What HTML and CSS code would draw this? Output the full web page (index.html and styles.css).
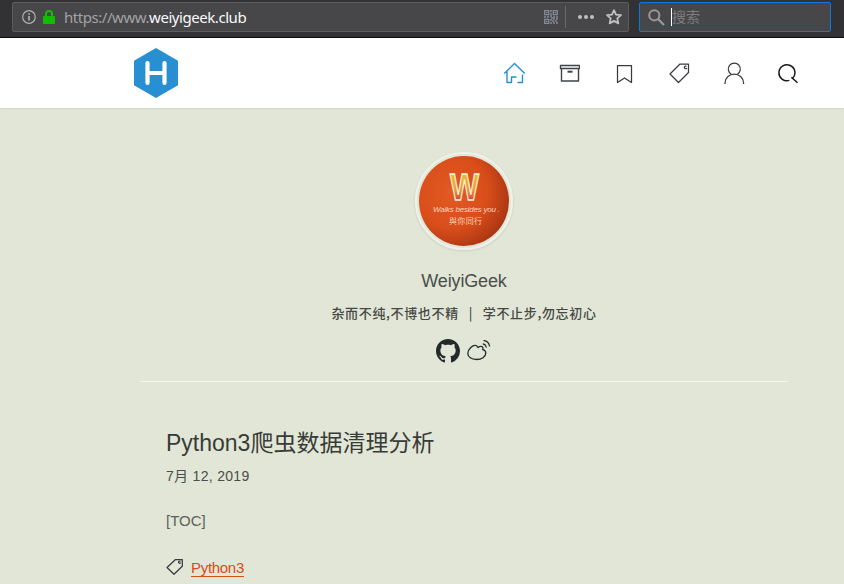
FILE: index.html
```html
<!DOCTYPE html>
<html lang="zh-CN">
<head>
<meta charset="utf-8">
<title>WeiyiGeek</title>
<link rel="stylesheet" href="styles.css">
</head>
<body>
<div class="toolbar">
  <div class="address">
    <svg class="info" width="14" height="14" viewBox="0 0 14 14" fill="none" stroke="#b1b1b3"><circle cx="7" cy="7" r="6.3" stroke-width="1.2"/><path d="M7 6v4.5M7 3.3v1.5" stroke-width="1.7"/></svg>
    <svg class="lock" width="12" height="14" viewBox="0 0 12 14"><path d="M3 7V4a3 3 0 0 1 6 0v3" fill="none" stroke="#12bc00" stroke-width="2"/><rect y="6" width="12" height="8" rx="1" fill="#12bc00"/></svg>
    <span class="url">https://www.<b>weiyigeek.club</b></span>
    <svg class="qr" width="14" height="14" viewBox="0 0 14 14" fill="none" stroke="#858b96"><path d="M.7.7h4v4h-4zM9.3.7h4v4h-4zM.7 9.3h4v4h-4z" stroke-width="1.3"/><path d="M2 2.7h1.5M10.5 2.7H12M2 11.3h1.5M6 1h2M7 3v2M0 7h2M3 7h2M6 6h2M9 7h2M12 7h2M7 8h2M6 10h2M9 9h2M12 9h2M8 11h2M11 11h2M6 13h2M9 13h2M12 13h2" stroke-width="1.3"/></svg>
    <span class="divider"></span>
    <svg class="dots" width="16" height="4" viewBox="0 0 16 4" fill="#c0c0c2"><circle cx="2" cy="2" r="2"/><circle cx="8" cy="2" r="2"/><circle cx="14" cy="2" r="2"/></svg>
    <svg width="16" height="16" viewBox="0 0 16 16" fill="none" stroke="#c0c0c2" stroke-width="1.8" stroke-linejoin="round"><path d="M8 1.2l2 4.4 5 .5-3.7 3.3 1 5L8 11.9l-4.3 2.5 1-5L1 6.1l5-.5z"/></svg>
  </div>
  <div class="search">
    <svg width="17" height="17" viewBox="0 0 17 17" fill="none" stroke="#98989a" stroke-width="2"><circle cx="6.3" cy="6.3" r="5.1"/><path d="M10 10l6 6" stroke-width="2.3"/></svg>
    <span class="caret"></span><span class="placeholder">搜索</span>
  </div>
</div>

<header class="header">
  <a class="logo"><svg width="46" height="52" viewBox="0 0 46 52"><path d="M23 1l22 12.7v24.6L23 51 1 38.300V13.700z" fill="#278fd2"/><path d="M14.500 16v20M31.500 16v20M14.500 26h17" fill="none" stroke="#fff" stroke-width="4.200" stroke-linecap="round"/></svg></a>
  <nav class="nav">
    <svg class="active" viewBox="0 0 22 22"><path d="M1.300 11.500L11.500 1.500l10.200 10M4 9.500v11h4.500v-5.500h5M14.500 20.500h5v-8"/></svg>
    <svg class="archive" viewBox="0 0 22 22"><path d="M2.500 3.500h19v3h-19zM3.500 6.500v12.500h17v-12.500"/><path d="M9.500 9.700h5" stroke-width="2"/></svg>
    <svg viewBox="0 0 22 22"><path d="M4.500 20.500v-17h14v17l-7-4.500z"/></svg>
    <svg viewBox="0 0 22 22"><path d="M12 2h8.500v8.500L10.500 20.500 2 12z"/><path d="M18.500 4.400a1.300 1.300 0 1 0 .3 1.500"/></svg>
    <svg viewBox="0 0 22 22"><path d="M8.300 12.200a6 6 0 1 1 6 0"/><path d="M2 22v-1a9.300 8.800 0 0 1 18.600 0v1"/></svg>
    <svg class="find" viewBox="0 0 22 22"><path d="M11.300 18.400a8 8 0 1 1 3.200-1.900l-1-1.200M14.500 16.300l5 4.500"/></svg>
  </nav>
</header>

<main class="page">
  <section class="profile">
    <div class="avatar">
      <svg width="90" height="90" viewBox="0 0 90 90">
        <defs>
          <radialGradient id="orange" cx=".36" cy=".4" r=".68"><stop offset="0" stop-color="#e15b24"/><stop offset=".6" stop-color="#d94d1a"/><stop offset="1" stop-color="#a93513"/></radialGradient>
          <linearGradient id="letter" x2="0" y2="1"><stop offset=".2" stop-color="#e6b936"/><stop offset=".55" stop-color="#e6a13b"/><stop offset=".8" stop-color="#d64336"/></linearGradient>
        </defs>
        <circle cx="45" cy="45" r="45" fill="url(#orange)"/>
        <text class="initial" x="45.500" y="44" textLength="29" lengthAdjust="spacingAndGlyphs">W</text>
        <text class="motto" x="14" y="56" textLength="67">Walks besides you .</text>
        <text class="motto-cn" x="30" y="68" textLength="33">與你同行</text>
      </svg>
    </div>
    <h1 class="name">WeiyiGeek</h1>
    <p class="tagline"><span>杂而不纯,不博也不精</span><span class="bar">|</span><span>学不止步,勿忘初心</span></p>
    <div class="social">
      <svg width="24" height="24" viewBox="0 0 16 16" fill="#24292e"><path d="M8 0C3.580 0 0 3.580 0 8c0 3.540 2.290 6.530 5.470 7.590.4.070.55-.17.55-.38 0-.19-.01-.82-.01-1.490-2.010.37-2.530-.49-2.690-.94-.09-.23-.48-.94-.82-1.130-.28-.15-.68-.52-.01-.53.63-.01 1.080.58 1.230.82.72 1.210 1.870.87 2.330.66.07-.52.28-.87.51-1.070-1.780-.2-3.640-.89-3.640-3.950 0-.87.31-1.590.82-2.150-.08-.2-.36-1.020.08-2.120 0 0 .67-.21 2.200.82.64-.18 1.320-.27 2-.27s1.360.09 2 .27c1.530-1.040 2.200-.82 2.200-.82.44 1.100.16 1.920.08 2.120.51.56.82 1.270.82 2.150 0 3.070-1.870 3.750-3.650 3.950.29.25.54.73.54 1.480 0 1.070-.01 1.930-.01 2.200 0 .21.15.46.55.38A8.010 8.010 0 0 0 16 8c0-4.420-3.580-8-8-8z"/></svg>
      <svg width="24" height="22" viewBox="0 0 24 22" fill="none" stroke="#24292e" stroke-width="1.300" stroke-linecap="round"><path d="M11 8.500c1.500-1.300 4.500-1.600 5 .2.200.8-.4 1.500-.2 2 1.500.4 3 1.300 3 3.300 0 3.800-4.300 6.500-9.300 6.500S.8 18 .8 14.500C.8 10.200 6 5.500 9 6.500c1.500.5.8 1.500 2 2zM16.300 5a3.800 3.800 0 0 1 2.900 3M17 1.600a6.500 6.500 0 0 1 5.500 5.200"/></svg>
    </div>
  </section>
  <article class="post">
    <h2>Python3爬虫数据清理分析</h2>
    <time>7月 12, 2019</time>
    <p class="excerpt">[TOC]</p>
    <div class="tags"><svg width="18" height="18" viewBox="0 0 18 18"><path d="M9.500 1.500h6.800v6.800L8 16.300 1 9.500z"/><path d="M14.500 3.400a1.100 1.100 0 1 0 .2 1.200"/></svg><a>Python3</a></div>
  </article>
</main>
</body>
</html>
```
FILE: styles.css
```css
* { box-sizing: border-box; }
body { margin: 0; width: 844px; height: 584px; overflow: hidden; background: #e1e6d6; color: #4a4d4a; font-family: "Liberation Sans", "Noto Sans CJK SC", sans-serif; }
svg { display: block; flex: none; }
h1, h2, p { margin: 0; font-weight: 400; }

.toolbar { display: flex; gap: 10px; height: 38px; padding: 2px 13px 5px 12px; background: #323234; border-bottom: 1px solid #0c0c0d; }
.address, .search { display: flex; align-items: center; height: 30px; background: #474749; border: 1px solid #5c5c5e; border-radius: 2px; }
.address { width: 617px; padding: 0 6px 0 9px; }
.lock { margin: 0 9px 0 7px; }
.url { color: #a2a2a4; font: 15px/28px "Noto Sans", sans-serif; letter-spacing: -.45px; white-space: nowrap; }
.url b { color: #f9f9fa; font-weight: 400; }
.qr { margin-left: auto; }
.divider { width: 1px; height: 22px; margin: 0 12px 0 7px; background: #68686b; }
.dots { margin-right: 12px; }
.search { width: 192px; padding-left: 8px; border-color: #0a7add; }
.caret { width: 1px; height: 18px; margin-left: 6px; background: #fff; }
.placeholder { margin-top: -2px; color: #7c7c7e; font: 14px/28px "Noto Sans CJK SC", sans-serif; }

.header { display: flex; align-items: center; justify-content: space-between; height: 70px; padding: 0 44px 0 133px; background: #fff; box-shadow: 0 1px 2px rgba(0, 0, 0, .07); }
.nav { display: flex; gap: 33px; }
.nav svg, .tags svg { fill: none; stroke: #383b40; stroke-width: 1.250; stroke-linejoin: round; }
.nav svg { width: 22px; height: 22px; }
.nav .active { stroke: #278fd2; stroke-width: 1.400; }
.nav .archive { stroke: #3e4145; stroke-width: 1.400; }
.nav .find { stroke: #16181a; stroke-width: 1.500; }

.page { width: 648px; margin-left: 140px; }
.profile { display: flex; flex-direction: column; align-items: center; height: 274px; padding-top: 44px; border-bottom: 1px solid #f5f7ef; }
.avatar { padding: 2px; border: 2px solid #eff1ea; border-radius: 50%; box-shadow: 0 1px 3px rgba(0, 0, 0, .1); width: 98px; height: 98px; flex: none; }
.initial { font: bold 36px "Liberation Sans", sans-serif; text-anchor: middle; fill: url(#letter); stroke: #fff0d6; stroke-width: 1.300; }
.motto { font: italic 8px "Liberation Sans", sans-serif; fill: #f7d4bd; }
.motto-cn { font: 8px "Noto Sans CJK SC", sans-serif; fill: #f7d4bd; }
.name { margin-top: 20px; font-size: 18px; line-height: 22px; letter-spacing: -.15px; }
.tagline { display: flex; margin-top: 11px; font: 500 13px/20px "Noto Sans CJK SC", sans-serif; letter-spacing: .65px; white-space: nowrap; color: #454845; }
.bar { width: 24px; text-align: center; }
.social { display: flex; gap: 7px; margin: 16px 1px 0 0; }

.post { padding: 46px 26px 0; }
.post h2 { font-size: 23px; line-height: 30px; color: #383b38; white-space: nowrap; }
.post time { display: block; margin-top: 8px; font-size: 14px; line-height: 20px; letter-spacing: .3px; }
.excerpt { margin-top: 25px; font-size: 15px; line-height: 20px; color: #5d605d; }
.tags { display: flex; align-items: center; gap: 7px; height: 20px; margin-top: 26px; }
.tags a { margin-top: 2px; border-bottom: 1px solid #d94d16; color: #d94d16; font-size: 15px; line-height: 16px; letter-spacing: -.3px; }
```
